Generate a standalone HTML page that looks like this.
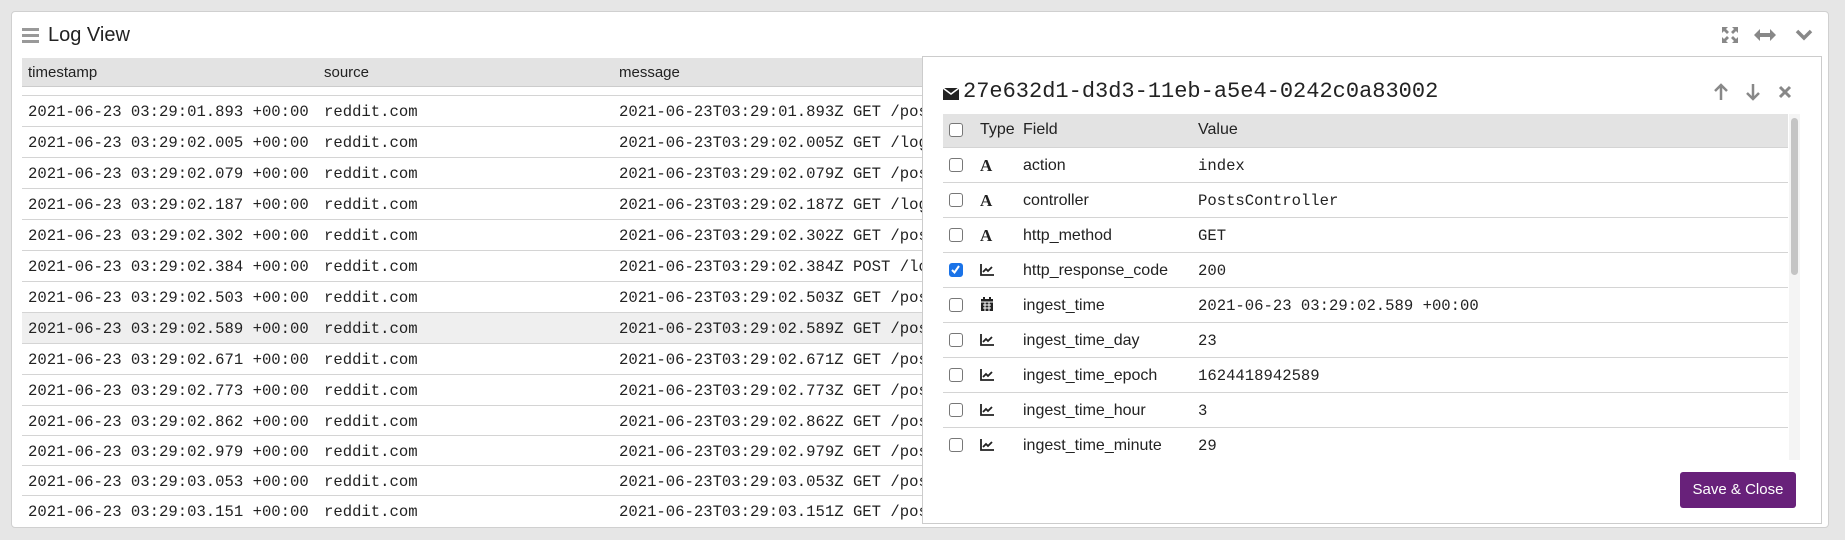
<!DOCTYPE html>
<html><head><meta charset="utf-8"><style>
*{box-sizing:border-box;margin:0;padding:0}
body{width:1845px;height:540px;background:#e6e6e6;position:relative;overflow:hidden;font-family:"Liberation Sans",sans-serif;color:#222}
.panel{position:absolute;left:11px;top:11px;width:1818px;height:517px;background:#fff;border:1px solid #d0d0d0;border-radius:4px;overflow:hidden}
.title{position:absolute;left:36px;top:12px;font-size:20px;color:#222}
.ham{position:absolute;left:10px;top:16px;width:17px}
.ham i{display:block;height:3px;background:#999;margin-bottom:3px}
.hdr{position:absolute;left:10px;top:46px;width:1800px;height:29px;background:#e3e3e3;border-bottom:1px solid #ccc}
.hdr span{position:absolute;top:6px;font-size:15px}
.row{position:absolute;left:10px;width:1800px;height:31px;border-top:1px solid #d4d4d4;font-family:"Liberation Mono",monospace;font-size:15.6px}
.row span{position:absolute;top:7px;white-space:nowrap}
.c1{left:6px}.c2{left:302px}.c3{left:597px}
.modal{position:absolute;left:922px;top:56px;width:900px;height:468px;background:#fff;border:1px solid #ccc}
.mt{position:absolute;left:40px;top:22px;font-family:"Liberation Mono",monospace;font-size:22px;color:#222}
.tbl{position:absolute;left:20px;top:57px;width:845px;height:347px;overflow:hidden}
.th{position:absolute;left:0;top:0;width:845px;height:33px;background:#e3e3e3}
.tr{position:absolute;left:0;width:845px;height:35px;border-top:1px solid #d4d4d4}
.cb{position:absolute;left:6px;width:14px;height:14px;border:1.5px solid #777;border-radius:3px;background:#fff}
.cb.on{background:#1a73e8;border-color:#1a73e8}
.f{position:absolute;left:80px;font-size:16px;top:9px}
.v{position:absolute;left:255px;font-family:"Liberation Mono",monospace;font-size:15.6px;top:9px}
.ty{position:absolute;left:37px;top:8px;font-size:17px;font-weight:bold;font-family:"Liberation Serif",serif}
.sb{position:absolute;left:866px;top:57px;width:11px;height:346px;background:#f4f4f4}
.sb i{position:absolute;left:2px;top:4px;width:7px;height:157px;background:#c4c4c4;border-radius:4px}
.btn{position:absolute;left:757px;top:415px;width:116px;height:36px;background:#68217a;color:#fff;border-radius:3px;font-size:15px;text-align:center;line-height:36px}
</style></head><body>
<div class="panel">
<div class="ham"><i></i><i></i><i></i></div>
<div class="title">Log View</div>
<svg style="position:absolute;left:1709px;top:14px" width="18" height="18" viewBox="0 0 18 18" fill="#888"><path d="M1 1h6L5 3l3 3-2 2-3-3-2 2zM17 1v6l-2-2-3 3-2-2 3-3-2-2zM1 17v-6l2 2 3-3 2 2-3 3 2 2zM17 17h-6l2-2-3-3 2-2 3 3 2-2z"/></svg>
<svg style="position:absolute;left:1742px;top:16px" width="22" height="14" viewBox="0 0 22 14" fill="#888"><path d="M0 7l6-6v4h10V1l6 6-6 6V9H6v4z"/></svg>
<svg style="position:absolute;left:1783px;top:16px" width="18" height="14" viewBox="0 0 18 14"><path d="M2 3l7 7 7-7" stroke="#888" stroke-width="3.5" fill="none"/></svg>
<div class="hdr"><span style="left:6px">timestamp</span><span style="left:302px">source</span><span style="left:597px">message</span></div>
<div class="row" style="top:83px"><span class="c1">2021-06-23 03:29:01.893 +00:00</span><span class="c2">reddit.com</span><span class="c3">2021-06-23T03:29:01.893Z GET /pos</span></div>
<div class="row" style="top:114px"><span class="c1">2021-06-23 03:29:02.005 +00:00</span><span class="c2">reddit.com</span><span class="c3">2021-06-23T03:29:02.005Z GET /log</span></div>
<div class="row" style="top:145px"><span class="c1">2021-06-23 03:29:02.079 +00:00</span><span class="c2">reddit.com</span><span class="c3">2021-06-23T03:29:02.079Z GET /pos</span></div>
<div class="row" style="top:176px"><span class="c1">2021-06-23 03:29:02.187 +00:00</span><span class="c2">reddit.com</span><span class="c3">2021-06-23T03:29:02.187Z GET /log</span></div>
<div class="row" style="top:207px"><span class="c1">2021-06-23 03:29:02.302 +00:00</span><span class="c2">reddit.com</span><span class="c3">2021-06-23T03:29:02.302Z GET /pos</span></div>
<div class="row" style="top:238px"><span class="c1">2021-06-23 03:29:02.384 +00:00</span><span class="c2">reddit.com</span><span class="c3">2021-06-23T03:29:02.384Z POST /lo</span></div>
<div class="row" style="top:269px"><span class="c1">2021-06-23 03:29:02.503 +00:00</span><span class="c2">reddit.com</span><span class="c3">2021-06-23T03:29:02.503Z GET /pos</span></div>
<div class="row" style="top:300px;background:#efefef"><span class="c1">2021-06-23 03:29:02.589 +00:00</span><span class="c2">reddit.com</span><span class="c3">2021-06-23T03:29:02.589Z GET /pos</span></div>
<div class="row" style="top:331px"><span class="c1">2021-06-23 03:29:02.671 +00:00</span><span class="c2">reddit.com</span><span class="c3">2021-06-23T03:29:02.671Z GET /pos</span></div>
<div class="row" style="top:362px"><span class="c1">2021-06-23 03:29:02.773 +00:00</span><span class="c2">reddit.com</span><span class="c3">2021-06-23T03:29:02.773Z GET /pos</span></div>
<div class="row" style="top:393px"><span class="c1">2021-06-23 03:29:02.862 +00:00</span><span class="c2">reddit.com</span><span class="c3">2021-06-23T03:29:02.862Z GET /pos</span></div>
<div class="row" style="top:423px"><span class="c1">2021-06-23 03:29:02.979 +00:00</span><span class="c2">reddit.com</span><span class="c3">2021-06-23T03:29:02.979Z GET /pos</span></div>
<div class="row" style="top:453px"><span class="c1">2021-06-23 03:29:03.053 +00:00</span><span class="c2">reddit.com</span><span class="c3">2021-06-23T03:29:03.053Z GET /pos</span></div>
<div class="row" style="top:483px"><span class="c1">2021-06-23 03:29:03.151 +00:00</span><span class="c2">reddit.com</span><span class="c3">2021-06-23T03:29:03.151Z GET /pos</span></div>
</div>

<div class="modal">
<svg style="position:absolute;left:20px;top:31px" width="16" height="12" viewBox="0 0 16 12"><rect width="16" height="12" fill="#222"/><path d="M0 0l8 6 8-6" stroke="#fff" stroke-width="1.5" fill="none"/></svg>
<div class="mt">27e632d1-d3d3-11eb-a5e4-0242c0a83002</div>
<svg style="position:absolute;left:790px;top:26px" width="16" height="18" viewBox="0 0 16 18"><path d="M8 17V2M2 8l6-6 6 6" stroke="#888" stroke-width="2.5" fill="none"/></svg>
<svg style="position:absolute;left:822px;top:26px" width="16" height="18" viewBox="0 0 16 18"><path d="M8 1v15M2 10l6 6 6-6" stroke="#888" stroke-width="2.5" fill="none"/></svg>
<svg style="position:absolute;left:855px;top:28px" width="14" height="14" viewBox="0 0 14 14"><path d="M2 2l10 10M12 2L2 12" stroke="#888" stroke-width="3" fill="none"/></svg>
<div class="tbl">
<div class="th"><div class="cb" style="top:9px"></div><span style="position:absolute;left:37px;top:7px;font-size:16px">Type</span><span style="position:absolute;left:80px;top:7px;font-size:16px">Field</span><span style="position:absolute;left:255px;top:7px;font-size:16px">Value</span></div>
<div class="tr" style="top:33px"><div class="cb" style="top:10px"></div><span class="ty">A</span><span class="f">action</span><span class="v">index</span></div>
<div class="tr" style="top:68px"><div class="cb" style="top:10px"></div><span class="ty">A</span><span class="f">controller</span><span class="v">PostsController</span></div>
<div class="tr" style="top:103px"><div class="cb" style="top:10px"></div><span class="ty">A</span><span class="f">http_method</span><span class="v">GET</span></div>
<div class="tr" style="top:138px"><div class="cb on" style="top:10px"><svg width="11" height="11" viewBox="0 0 11 11" style="position:absolute;left:0;top:0"><path d="M2 6l2.5 2.5L9 2" stroke="#fff" stroke-width="2" fill="none"/></svg></div><svg style="position:absolute;left:37px;top:11px" width="14" height="12" viewBox="0 0 14 12"><path d="M1 0v11h13M3 8l3-3 2 2 4-4" stroke="#222" stroke-width="1.8" fill="none"/></svg><span class="f">http_response_code</span><span class="v">200</span></div>
<div class="tr" style="top:173px"><div class="cb" style="top:10px"></div><svg style="position:absolute;left:38px;top:9px" width="12" height="14" viewBox="0 0 12 14"><rect x="0" y="2" width="12" height="12" fill="#222"/><rect x="2" y="0" width="2" height="3" fill="#222"/><rect x="8" y="0" width="2" height="3" fill="#222"/><path d="M0 5h12M2 8h8M2 11h8M4 5v9M8 5v9" stroke="#fff" stroke-width="1"/></svg><span class="f">ingest_time</span><span class="v">2021-06-23 03:29:02.589 +00:00</span></div>
<div class="tr" style="top:208px"><div class="cb" style="top:10px"></div><svg style="position:absolute;left:37px;top:11px" width="14" height="12" viewBox="0 0 14 12"><path d="M1 0v11h13M3 8l3-3 2 2 4-4" stroke="#222" stroke-width="1.8" fill="none"/></svg><span class="f">ingest_time_day</span><span class="v">23</span></div>
<div class="tr" style="top:243px"><div class="cb" style="top:10px"></div><svg style="position:absolute;left:37px;top:11px" width="14" height="12" viewBox="0 0 14 12"><path d="M1 0v11h13M3 8l3-3 2 2 4-4" stroke="#222" stroke-width="1.8" fill="none"/></svg><span class="f">ingest_time_epoch</span><span class="v">1624418942589</span></div>
<div class="tr" style="top:278px"><div class="cb" style="top:10px"></div><svg style="position:absolute;left:37px;top:11px" width="14" height="12" viewBox="0 0 14 12"><path d="M1 0v11h13M3 8l3-3 2 2 4-4" stroke="#222" stroke-width="1.8" fill="none"/></svg><span class="f">ingest_time_hour</span><span class="v">3</span></div>
<div class="tr" style="top:313px"><div class="cb" style="top:10px"></div><svg style="position:absolute;left:37px;top:11px" width="14" height="12" viewBox="0 0 14 12"><path d="M1 0v11h13M3 8l3-3 2 2 4-4" stroke="#222" stroke-width="1.8" fill="none"/></svg><span class="f">ingest_time_minute</span><span class="v">29</span></div>
</div>
<div class="sb"><i></i></div>
<div class="btn">Save &amp; Close</div>
</div>
</body></html>
